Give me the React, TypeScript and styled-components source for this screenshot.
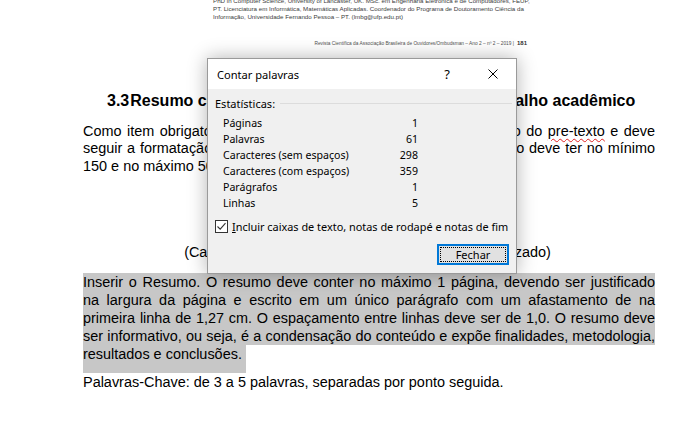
import React from 'react'
import styled, { createGlobalStyle } from 'styled-components'

const GlobalStyle = createGlobalStyle`
  html, body {
    margin: 0;
    padding: 0;
    background: #ffffff;
  }
  body {
    overflow: hidden;
  }
`

const Page = styled.div`
  position: relative;
  width: 693px;
  height: 426px;
  overflow: hidden;
  background: #ffffff;
  font-family: 'Liberation Sans', Arial, sans-serif;
  color: #000000;
`

const Footnote = styled.div`
  margin: -3px 0 0 213px;
  font-size: 6.2px;
  line-height: 8.2px;
  color: #3c3c3c;
  white-space: nowrap;
`

const RunningHeader = styled.div`
  margin-top: 17px;
  padding-right: 166px;
  text-align: right;
  font-size: 4.8px;
  line-height: 8px;
  color: #505050;
  white-space: nowrap;

  b {
    margin-left: 3px;
    font-size: 6px;
    color: #333333;
  }
`

const Body = styled.div`
  width: 572px;
  padding-left: 83px;
  font-size: 14.45px;
`

const Heading = styled.h2`
  margin: 43px 0 0 24px;
  font-size: 16px;
  line-height: 20px;
  font-weight: 700;
  white-space: nowrap;
`

const HeadingNumber = styled.span`
  margin-right: 1px;
`

const Paragraph = styled.div<{ $top: number }>`
  margin-top: ${(p) => p.$top}px;
`

const Line = styled.div<{ $last?: boolean }>`
  line-height: 17.6px;
  text-align: justify;
  text-align-last: ${(p) => (p.$last ? 'left' : 'justify')};
  white-space: nowrap;
`

const MarkedLine = styled(Line)`
  line-height: 18px;
  background: #c7c7c7;
`

const MarkedTail = styled.div`
  width: fit-content;
  padding: 0 4px 10px 0;
  line-height: 18px;
  background: #c7c7c7;
`

const Misspelled = styled.span`
  text-decoration: underline wavy #e02020;
  text-decoration-thickness: 1px;
  text-underline-offset: 2px;
`

const Caption = styled.div`
  margin-top: 68px;
  padding-right: 3px;
  line-height: 18px;
  text-align: center;
`

const Keywords = styled.div`
  line-height: 18px;
`

/* dialog */

const Dialog = styled.div`
  position: absolute;
  left: 207px;
  top: 58px;
  width: 310px;
  height: 216px;
  box-sizing: border-box;
  display: flex;
  flex-direction: column;
  border: 1px solid #9a9a9a;
  background: #f0f0f0;
  box-shadow: 0 0 18px rgba(0, 0, 0, 0.3);
  font-family: 'Noto Sans', 'Open Sans', sans-serif;
  font-size: 10.6px;
  color: #000000;
`

const TitleBar = styled.div`
  display: flex;
  align-items: center;
  height: 30px;
  padding-left: 9px;
  background: #ffffff;
`

const Title = styled.div`
  flex: 1;
  font-size: 11.1px;
`

const CaptionButton = styled.div`
  display: flex;
  align-items: center;
  justify-content: center;
  width: 46px;
  height: 30px;
  font-size: 13px;
`

const Content = styled.div`
  flex: 1;
  display: flex;
  flex-direction: column;
  padding: 6px 4px 8px 7px;
`

const GroupHeader = styled.div`
  display: flex;
  align-items: center;
  gap: 5px;
  height: 16px;
  font-size: 11px;

  &::after {
    content: '';
    flex: 1;
    height: 1px;
    background: #dcdcdc;
  }
`

const Stats = styled.div`
  display: grid;
  grid-template-columns: 1fr auto;
  width: 195px;
  margin: 4px 0 0 8px;
`

const StatCell = styled.div<{ $num?: boolean }>`
  height: 16px;
  line-height: 16px;
  text-align: ${(p) => (p.$num ? 'right' : 'left')};
`

const CheckRow = styled.label`
  display: flex;
  align-items: center;
  gap: 4px;
  height: 14px;
  margin-top: 8px;
  font-size: 10.9px;
  white-space: nowrap;
`

const CheckBox = styled.span`
  display: flex;
  width: 13px;
  height: 13px;
  box-sizing: border-box;
  border: 1px solid #333333;
  background: #ffffff;
`

const ButtonRow = styled.div`
  display: flex;
  justify-content: flex-end;
  margin-top: auto;
  padding-right: 3px;
`

const DialogButton = styled.button`
  position: relative;
  width: 72px;
  height: 21px;
  padding: 0;
  border: 2px solid #0078d7;
  background: #e1e1e1;
  font-family: inherit;
  font-size: 11px;
  color: #000000;

  &::before {
    content: '';
    position: absolute;
    inset: 1px;
    border: 1px dotted #000000;
  }
`

const stats: [string, string][] = [
  ['Páginas', '1'],
  ['Palavras', '61'],
  ['Caracteres (sem espaços)', '298'],
  ['Caracteres (com espaços)', '359'],
  ['Parágrafos', '1'],
  ['Linhas', '5'],
]

const CloseIcon = () => (
  <svg width="10" height="10" viewBox="0 0 10 10">
    <path d="M0.5 0.5 L9.5 9.5 M9.5 0.5 L0.5 9.5" stroke="#000" strokeWidth="1" fill="none" />
  </svg>
)

const CheckMark = () => (
  <svg width="11" height="11" viewBox="0 0 11 11">
    <path d="M1.5 5.5 L4.2 8.2 L9.5 2.2" stroke="#333" strokeWidth="1.1" fill="none" />
  </svg>
)

const WordCountDialog = () => (
  <Dialog>
    <TitleBar>
      <Title>Contar palavras</Title>
      <CaptionButton>?</CaptionButton>
      <CaptionButton>
        <CloseIcon />
      </CaptionButton>
    </TitleBar>
    <Content>
      <GroupHeader>Estatísticas:</GroupHeader>
      <Stats>
        {stats.map(([label, value]) => (
          <React.Fragment key={label}>
            <StatCell>{label}</StatCell>
            <StatCell $num>{value}</StatCell>
          </React.Fragment>
        ))}
      </Stats>
      <CheckRow>
        <CheckBox>
          <CheckMark />
        </CheckBox>
        <span>
          <u>I</u>ncluir caixas de texto, notas de rodapé e notas de fim
        </span>
      </CheckRow>
      <ButtonRow>
        <DialogButton>Fechar</DialogButton>
      </ButtonRow>
    </Content>
  </Dialog>
)

const App = () => (
  <>
    <GlobalStyle />
    <Page>
      <Footnote>
        <div>
          PhD in Computer Science, University of Lancaster, UK. MSc. em Engenharia Eletrônica e de Computadores, FEUP,
        </div>
        <div>
          PT. Licenciatura em Informática, Matemáticas Aplicadas. Coordenador do Programa de Doutoramento Ciência da
        </div>
        <div>Informação, Universidade Fernando Pessoa – PT. (lmbg@ufp.edu.pt)</div>
      </Footnote>
      <RunningHeader>
        Revista Científica da Associação Brasileira de Ouvidores/Ombudsman – Ano 2 – nº 2 – 2019 |<b>181</b>
      </RunningHeader>
      <Body>
        <Heading>
          <HeadingNumber>3.3</HeadingNumber>Resumo como elemento pré-textual básico do trabalho acadêmico
        </Heading>
        <Paragraph $top={12}>
          <Line>
            Como item obrigatório, o resumo é o primeiro e principal elemento do{' '}
            <Misspelled>pre-texto</Misspelled> e deve
          </Line>
          <Line>seguir a formatação padrão estabelecida para o trabalho. O resumo deve ter no mínimo</Line>
          <Line $last>150 e no máximo 500 palavras.</Line>
        </Paragraph>
        <Caption>(Caixa de texto com o resumo do trabalho a ser utilizado)</Caption>
        <Paragraph $top={12}>
          <MarkedLine>
            Inserir o Resumo. O resumo deve conter no máximo 1 página, devendo ser justificado
          </MarkedLine>
          <MarkedLine>
            na largura da página e escrito em um único parágrafo com um afastamento de na
          </MarkedLine>
          <MarkedLine>
            primeira linha de 1,27 cm. O espaçamento entre linhas deve ser de 1,0. O resumo deve
          </MarkedLine>
          <MarkedLine>
            ser informativo, ou seja, é a condensação do conteúdo e expõe finalidades, metodologia,
          </MarkedLine>
          <MarkedTail>resultados e conclusões.</MarkedTail>
        </Paragraph>
        <Keywords>Palavras-Chave: de 3 a 5 palavras, separadas por ponto seguida.</Keywords>
      </Body>
      <WordCountDialog />
    </Page>
  </>
)

export default App
